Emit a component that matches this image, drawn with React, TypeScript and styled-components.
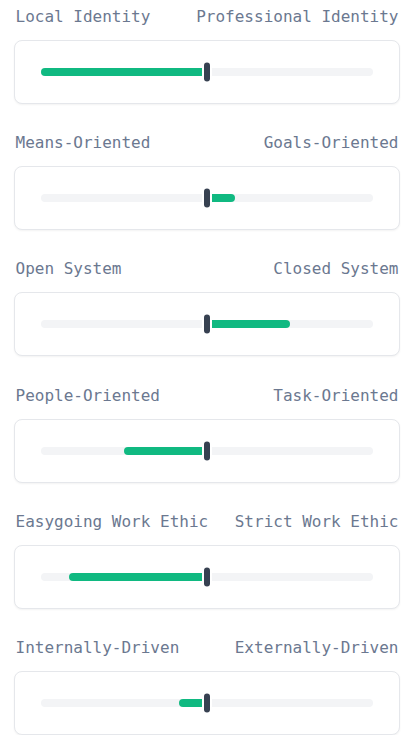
import React from "react";
import styled, { createGlobalStyle } from "styled-components";

const Global = createGlobalStyle`
  html, body { margin: 0; padding: 0; background: #ffffff; }
  body { font-family: "DejaVu Sans Mono", monospace; }
`;

const Page = styled.div`
  display: flex;
  flex-direction: column;
  gap: 27.35px;
  padding: 4.7px 14px 0 14px;
  width: 414px;
  box-sizing: border-box;
`;

const Section = styled.section`
  display: flex;
  flex-direction: column;
  gap: 11px;
`;

const Labels = styled.div`
  display: flex;
  justify-content: space-between;
  padding: 0 1.5px 0 1.5px;
  font-family: "DejaVu Sans Mono", monospace;
  font-size: 16px;
  line-height: 24px;
  color: #6b7890;
`;

const Card = styled.div`
  box-sizing: border-box;
  height: 64px;
  border: 1px solid #e5e7eb;
  border-radius: 8px;
  background: #ffffff;
  box-shadow: 0 1px 2px rgba(0, 0, 0, 0.05);
  display: flex;
  align-items: center;
  padding: 0 26px;
`;

const Track = styled.div`
  position: relative;
  flex: 1;
  height: 8px;
  border-radius: 4px;
  background: #f3f4f6;
`;

const Fill = styled.div<{ $side: "left" | "right" }>`
  position: absolute;
  top: 0;
  bottom: 0;
  background: #10b981;
  border-radius: ${(p) => (p.$side === "left" ? "4px 0 0 4px" : "0 4px 4px 0")};
`;

const Thumb = styled.div`
  position: absolute;
  left: 50%;
  top: 50%;
  width: 6px;
  height: 19px;
  transform: translate(-50%, -50%);
  border-radius: 3px;
  background: #374151;
  box-shadow: 0 0 0 2px #ffffff;
`;

type Item = { left: string; right: string; value: number };

const items: Item[] = [
  { left: "Local Identity", right: "Professional Identity", value: -6 },
  { left: "Means-Oriented", right: "Goals-Oriented", value: 1 },
  { left: "Open System", right: "Closed System", value: 3 },
  { left: "People-Oriented", right: "Task-Oriented", value: -3 },
  { left: "Easygoing Work Ethic", right: "Strict Work Ethic", value: -5 },
  { left: "Internally-Driven", right: "Externally-Driven", value: -1 },
];

function Slider({ value }: { value: number }) {
  const pct = ((value + 6) / 12) * 100;
  const side = value < 0 ? "left" : "right";
  const style =
    value < 0
      ? { left: `${pct}%`, width: `${50 - pct}%` }
      : { left: "50%", width: `${pct - 50}%` };
  return (
    <Track>
      {value !== 0 && <Fill $side={side} style={style} />}
      <Thumb />
    </Track>
  );
}

export default function App() {
  return (
    <>
      <Global />
      <Page>
        {items.map((it) => (
          <Section key={it.left}>
            <Labels>
              <span>{it.left}</span>
              <span>{it.right}</span>
            </Labels>
            <Card>
              <Slider value={it.value} />
            </Card>
          </Section>
        ))}
      </Page>
    </>
  );
}
